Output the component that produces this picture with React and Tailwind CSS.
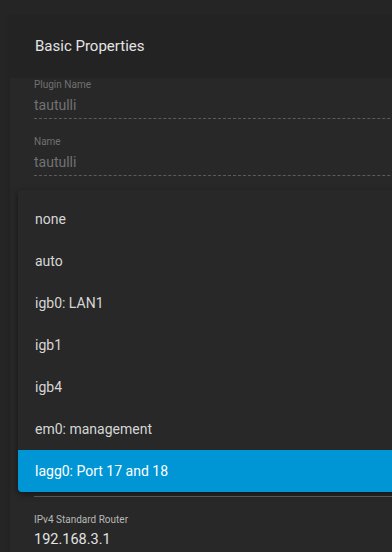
const options = ["none", "auto", "igb0: LAN1", "igb1", "igb4", "em0: management", "lagg0: Port 17 and 18"];

function Field({ label, value }) {
  return (
    <div className="flex flex-col">
      <div className="h-[12px] text-[10px] leading-[12px] text-[#707070]">{label}</div>
      <div className="mt-[4px] h-[20px] text-[14px] leading-[20px] text-[#727272]">{value}</div>
      <div className="mt-[3px] border-b border-dashed border-[#5c5c5c]" />
    </div>
  );
}

export default function App() {
  const selected = "lagg0: Port 17 and 18";

  return (
    <div
      className="relative w-[392px] h-[552px] overflow-hidden bg-[#252525] pt-[15px] pl-[10px]"
      style={{ fontFamily: "Roboto, 'Noto Sans', sans-serif" }}
    >
      <div className="w-[420px] h-[560px] bg-[#282828] shadow-md">
        <div className="h-[63px] bg-[#232323] px-[25px] flex items-center text-[15px] text-[#e4e4e4]">
          Basic Properties
        </div>
        <div className="pl-[24px] pt-[1px] flex flex-col">
          <Field label="Plugin Name" value="tautulli" />
          <div className="h-[17px]" />
          <Field label="Name" value="tautulli" />
          {/* select field, covered by the open menu */}
          <div className="h-[321px] border-b border-[#626262]" />
          <div className="mt-[17px] h-[12px] text-[10px] leading-[12px] text-[#b8b8b8]">IPv4 Standard Router</div>
          <div className="mt-[4px] h-[20px] text-[14.5px] leading-[20px] text-[#e2e2e2]">192.168.3.1</div>
        </div>
      </div>

      {/* open dropdown menu */}
      <div className="absolute left-[18px] top-[190px] w-[400px] bg-[#282828] rounded-[4px] pt-[8px] shadow-[0_2px_6px_rgba(0,0,0,0.5)] overflow-hidden">
        {options.map((opt) => (
          <div
            key={opt}
            className={
              opt === selected
                ? "h-[42px] pl-[17px] flex items-center text-[14px] text-white bg-[#0096d6]"
                : "h-[42px] pl-[17px] flex items-center text-[14px] text-[#d6d6d6]"
            }
          >
            {opt}
          </div>
        ))}
      </div>
    </div>
  );
}
